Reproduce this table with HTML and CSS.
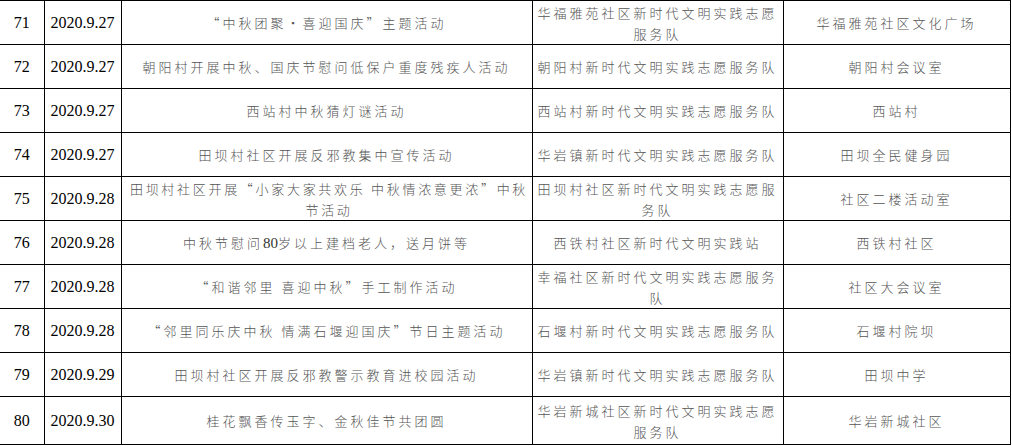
FILE: index.html
```html
<!DOCTYPE html>
<html lang="zh-CN">
<head>
<meta charset="utf-8">
<title>活动表</title>
<link rel="stylesheet" href="styles.css">
</head>
<body>
<table class="grid">
  <colgroup>
    <col class="c-no"><col class="c-date"><col class="c-act"><col class="c-team"><col class="c-place">
  </colgroup>
  <tbody>
    <tr><td class="num">71</td><td class="num">2020.9.27</td><td class="zh">“中秋团聚·喜迎国庆”主题活动</td><td class="zh">华福雅苑社区新时代文明实践志愿服务队</td><td class="zh">华福雅苑社区文化广场</td></tr>
    <tr><td class="num">72</td><td class="num">2020.9.27</td><td class="zh">朝阳村开展中秋、国庆节慰问低保户重度残疾人活动</td><td class="zh">朝阳村新时代文明实践志愿服务队</td><td class="zh">朝阳村会议室</td></tr>
    <tr><td class="num">73</td><td class="num">2020.9.27</td><td class="zh">西站村中秋猜灯谜活动</td><td class="zh">西站村新时代文明实践志愿服务队</td><td class="zh">西站村</td></tr>
    <tr><td class="num">74</td><td class="num">2020.9.27</td><td class="zh">田坝村社区开展反邪教集中宣传活动</td><td class="zh">华岩镇新时代文明实践志愿服务队</td><td class="zh">田坝全民健身园</td></tr>
    <tr><td class="num">75</td><td class="num">2020.9.28</td><td class="zh tight">田坝村社区开展“小家大家共欢乐 中秋情浓意更浓”中秋节活动</td><td class="zh">田坝村社区新时代文明实践志愿服务队</td><td class="zh">社区二楼活动室</td></tr>
    <tr><td class="num">76</td><td class="num">2020.9.28</td><td class="zh">中秋节慰问<span class="lat">80</span>岁以上建档老人，送月饼等</td><td class="zh">西铁村社区新时代文明实践站</td><td class="zh">西铁村社区</td></tr>
    <tr><td class="num">77</td><td class="num">2020.9.28</td><td class="zh">“和谐邻里 喜迎中秋”手工制作活动</td><td class="zh">幸福社区新时代文明实践志愿服务队</td><td class="zh">社区大会议室</td></tr>
    <tr><td class="num">78</td><td class="num">2020.9.28</td><td class="zh">“邻里同乐庆中秋 情满石堰迎国庆”节日主题活动</td><td class="zh">石堰村新时代文明实践志愿服务队</td><td class="zh">石堰村院坝</td></tr>
    <tr><td class="num">79</td><td class="num">2020.9.29</td><td class="zh">田坝村社区开展反邪教警示教育进校园活动</td><td class="zh">华岩镇新时代文明实践志愿服务队</td><td class="zh">田坝中学</td></tr>
    <tr class="last"><td class="num">80</td><td class="num">2020.9.30</td><td class="zh">桂花飘香传玉字、金秋佳节共团圆</td><td class="zh">华岩新城社区新时代文明实践志愿服务队</td><td class="zh">华岩新城社区</td></tr>
  </tbody>
</table>
</body>
</html>
```

FILE: styles.css
```css
html, body {
  margin: 0;
  padding: 0;
  background: #fff;
}

.grid {
  border-collapse: collapse;
  table-layout: fixed;
  width: 1010px;
}

.c-no { width: 44px; }
.c-date { width: 77px; }
.c-act { width: 411px; }
.c-team { width: 251px; }
.c-place { width: 227px; }

.grid tr { height: 44px; }
.grid tr.last { height: 48px; }

.grid td {
  border: 1px solid #000;
  padding: 0 4px;
  text-align: center;
  vertical-align: middle;
  overflow: hidden;
}

.grid td:first-child { border-left: none; }

.num {
  font-family: "Liberation Serif", "Times New Roman", serif;
  font-size: 16px;
  color: #000;
  line-height: 20px;
}

.zh {
  font-family: "Noto Sans CJK SC", "Noto Sans", sans-serif;
  font-weight: 300;
  font-size: 13px;
  letter-spacing: 3px;
  line-height: 21px;
  color: #555;
}

.grid td.tight {
  padding: 0 0 0 5px;
  letter-spacing: 2.7px;
}

.lat {
  font-family: "Liberation Serif", "Times New Roman", serif;
  font-size: 15px;
  letter-spacing: 0;
  color: #333;
}
```
